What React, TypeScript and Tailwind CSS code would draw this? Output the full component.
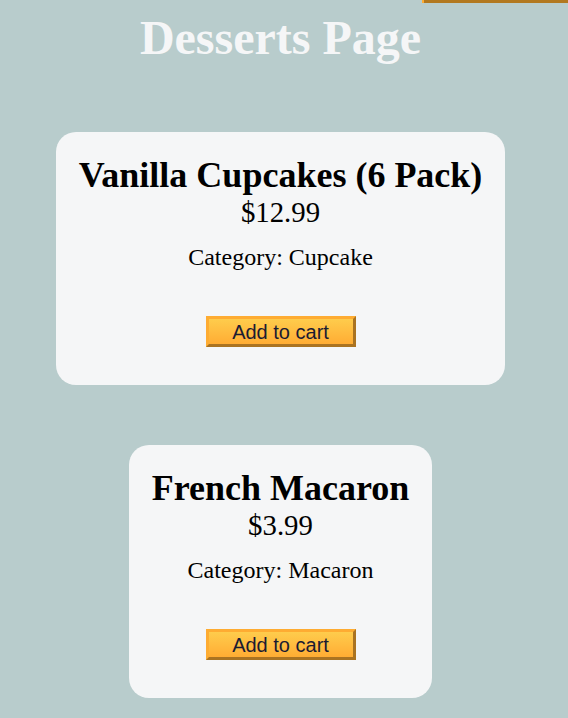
import React from "react";

const products = [
  { name: "Vanilla Cupcakes (6 Pack)", price: "$12.99", category: "Cupcake" },
  { name: "French Macaron", price: "$3.99", category: "Macaron" },
];

const App = () => {
  return (
    <div className="relative min-h-screen w-full bg-[#b8cccc] pr-[7px] font-['Liberation_Serif',serif] overflow-hidden">
      {/* cart button edge peeking in at the top right */}
      <div className="absolute top-0 right-0 w-[146px] h-[3px] bg-[#b2781f] border-l-2 border-[#feac32]"></div>

      <h1 className="pt-[10px] text-center text-[48px] leading-[55px] font-bold text-[#f5f6f7]">
        Desserts Page
      </h1>

      <div className="mt-[67px] flex flex-col items-center gap-[60px] pb-[40px]">
        {products.map((p) => (
          <div
            key={p.name}
            className="w-fit bg-[#f5f6f7] rounded-[20px] px-[23px] pt-[23px] pb-[38px] flex flex-col items-center text-center text-black"
          >
            <h2 className="text-[36px] leading-[41px] font-bold whitespace-nowrap">{p.name}</h2>
            <p className="text-[28.8px] leading-[33px]">{p.price}</p>
            <p className="mt-[14px] text-[24px] leading-[28px]">Category: {p.category}</p>
            <button className="mt-[45px] w-[150px] h-[31px] flex items-center justify-center border-[3px] [border-style:outset] border-[#feac32] bg-gradient-to-b from-[#fecc4c] to-[#ffac33] font-['Liberation_Sans',sans-serif] text-[20px] leading-none text-[#1b1b32]">
              Add to cart
            </button>
          </div>
        ))}
      </div>
    </div>
  );
};

export default App;
